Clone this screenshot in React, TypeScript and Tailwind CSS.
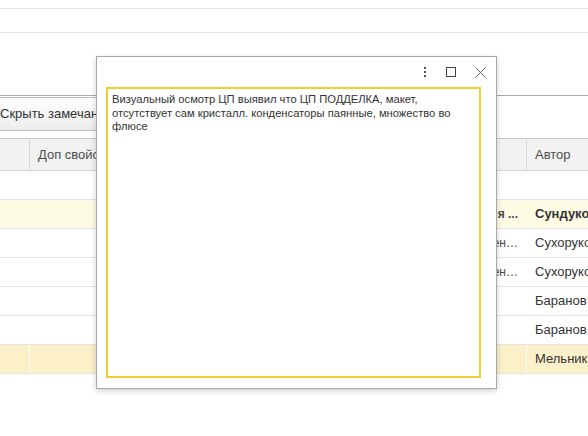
import { X } from "lucide-react";

type Row = {
  mid: string;
  author: string;
  bold?: boolean;
  tone?: "soft" | "selected";
};

const rows: Row[] = [
  { mid: "", author: "" },
  { mid: "Контрафактная продукция ...", author: "Сундуков", bold: true, tone: "soft" },
  { mid: "Замечание устранен…", author: "Сухоруков" },
  { mid: "Замечание устранен…", author: "Сухоруков" },
  { mid: "", author: "Баранов" },
  { mid: "", author: "Баранов" },
  { mid: "", author: "Мельник", tone: "selected" },
];

function TableRow({ row }: { row: Row }) {
  const bg =
    row.tone === "soft"
      ? "bg-[#fdfbe4]"
      : row.tone === "selected"
      ? "bg-[#fcf0c9]"
      : "bg-white";
  const divider = row.tone === "selected" ? "border-white" : "border-transparent";

  return (
    <div className={`flex h-[29px] border-b border-[#e3e3e3] ${bg}`}>
      <div className={`w-[30px] shrink-0 border-r ${divider}`} />
      <div className={`w-[497px] shrink-0 border-r ${divider} flex items-center justify-end pr-[8px] overflow-hidden`}>
        <span className={`whitespace-nowrap text-[12px] text-[#4a4a4a] ${row.bold ? "font-bold" : ""}`}>
          {row.mid}
        </span>
      </div>
      <div className="flex-1 min-w-0 flex items-center pl-[8px] whitespace-nowrap overflow-hidden">
        <span className={`text-[13px] text-[#333] ${row.bold ? "font-bold text-[12px]" : ""}`}>{row.author}</span>
      </div>
    </div>
  );
}

export default function App() {
  return (
    <div
      className="relative w-[588px] h-[436px] overflow-hidden bg-white text-[#333]"
      style={{ fontFamily: '"Liberation Sans", Arial, sans-serif' }}
    >
      <div className="h-[9px] border-b border-[#e0e0e0]" />
      <div className="h-[24px] border-b border-[#e0e0e0]" />
      <div className="h-[62px]" />

      {/* toolbar */}
      <div className="h-[43px] border-t border-[#a9a9a9] pt-[1px]">
        <div className="-ml-[8px] inline-flex h-[34px] items-center px-[7px] border border-[#bdbdbd] rounded-[2px] bg-gradient-to-b from-white to-[#ececec] text-[13px] text-[#333] whitespace-nowrap w-[240px]">
          Скрыть замечания
        </div>
      </div>

      {/* table */}
      <div className="border-t border-[#c8c8c8]">
        <div className="flex h-[32px] bg-[#f2f2f2] border-b border-[#d4d4d4] text-[13px] text-[#4d4d4d]">
          <div className="w-[30px] shrink-0 border-r border-[#d9d9d9]" />
          <div className="w-[497px] shrink-0 border-r border-[#d9d9d9] flex items-center pl-[8px] whitespace-nowrap">
            Доп свойства
          </div>
          <div className="flex-1 flex items-center pl-[8px]">Автор</div>
        </div>
        {rows.map((row, i) => (
          <TableRow key={i} row={row} />
        ))}
      </div>

      {/* note dialog */}
      <div className="absolute left-[96px] top-[56px] w-[401px] h-[333px] bg-white border border-[#a8a8a8] shadow-[0_2px_6px_rgba(0,0,0,0.18)] flex flex-col">
        <div className="h-[30px] shrink-0 flex items-center justify-end gap-[12px] pr-[6px]">
          <div className="flex flex-col gap-[2px] items-center w-[12px]">
            <span className="w-[2px] h-[2px] bg-[#555]" />
            <span className="w-[2px] h-[2px] bg-[#555]" />
            <span className="w-[2px] h-[2px] bg-[#555]" />
          </div>
          <div className="w-[16px] flex justify-center">
            <span className="w-[10px] h-[10px] border-[1.5px] border-[#444]" />
          </div>
          <X size={19} strokeWidth={1.2} className="text-[#555]" />
        </div>
        <div className="flex-1 ml-[9px] mr-[15px] mb-[10px] border-2 border-[#f3cd32] pl-[4px] pr-[12px] pt-[4px] text-[11.2px] leading-[13.5px] text-[#333]">
          Визуальный осмотр ЦП выявил что ЦП ПОДДЕЛКА, макет, отсутствует сам кристалл. конденсаторы паянные, множество во флюсе
        </div>
      </div>
    </div>
  );
}
